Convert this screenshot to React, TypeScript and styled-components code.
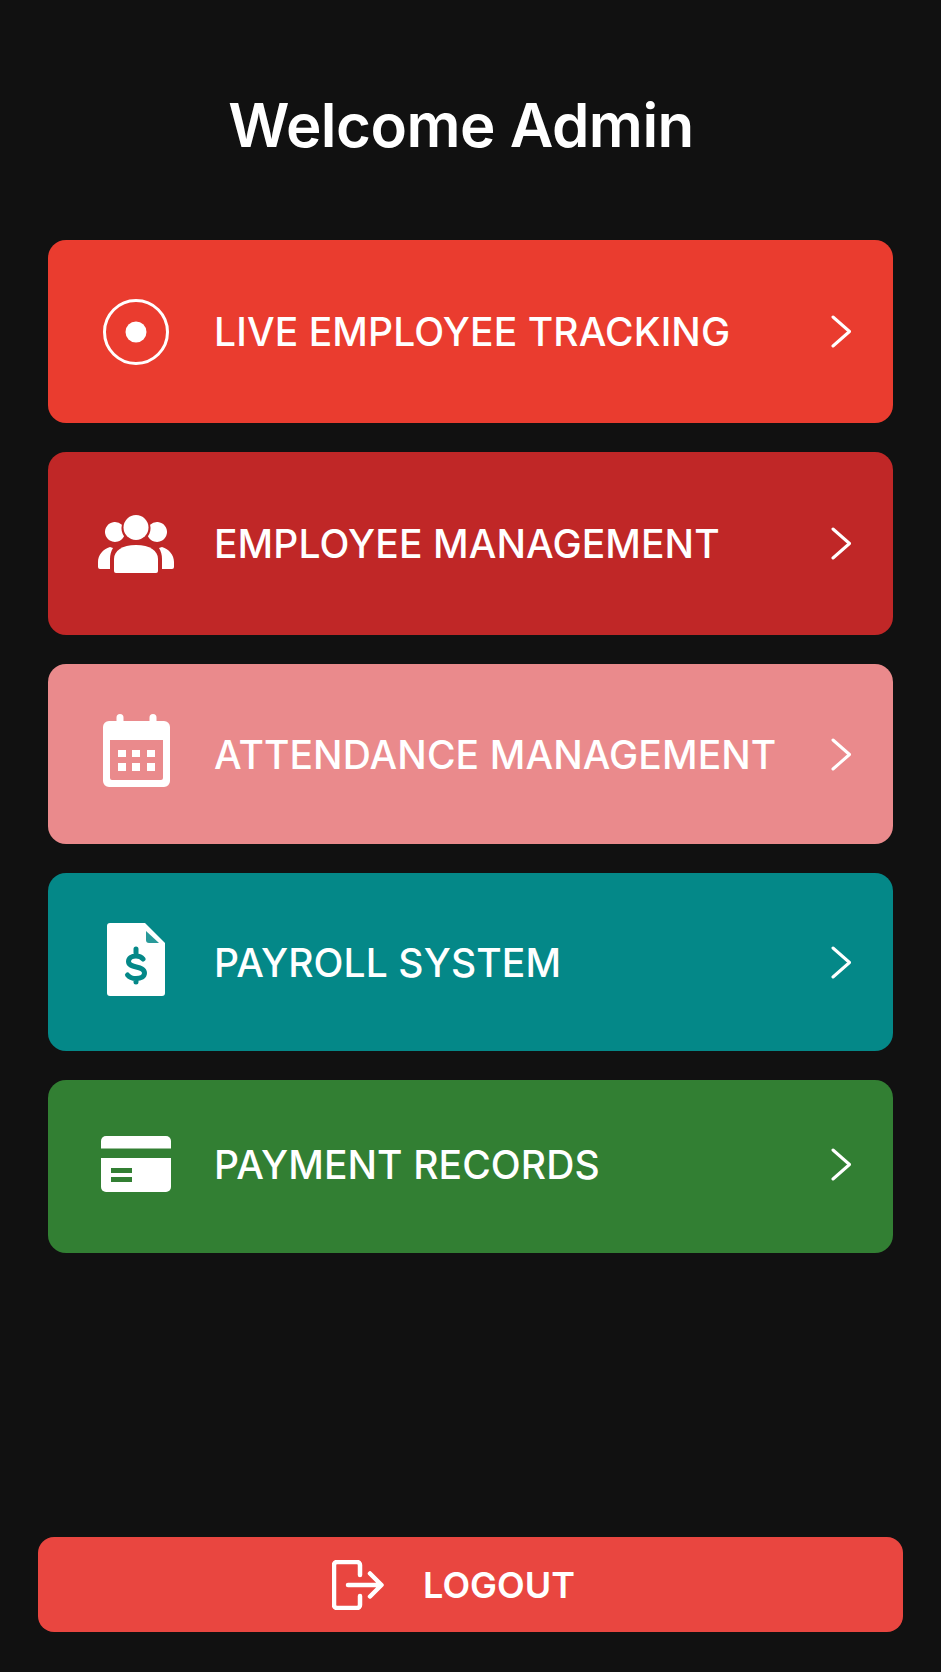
import React from "react";
import styled, { createGlobalStyle } from "styled-components";

const GlobalStyle = createGlobalStyle`
  html, body {
    margin: 0;
    padding: 0;
    background: #111111;
  }
  * {
    box-sizing: border-box;
  }
`;

const Screen = styled.main`
  width: 941px;
  height: 1672px;
  padding: 0 38px;
  display: flex;
  flex-direction: column;
  font-family: "Inter", "Liberation Sans", sans-serif;
  color: #ffffff;
  background: #111111;
`;

const Title = styled.h1`
  margin: 92px 0 0;
  padding-right: 19px;
  height: 66px;
  line-height: 66px;
  text-align: center;
  font-size: 60px;
  font-weight: 600;
  letter-spacing: -0.5px;
`;

const Menu = styled.nav`
  margin: 82px 10px 0;
  display: flex;
  flex-direction: column;
  gap: 29px;
`;

const Card = styled.a<{ $bg: string; $height: number; $shift: number }>`
  height: ${({ $height }) => $height}px;
  display: flex;
  align-items: center;
  padding: 0 42px ${({ $shift }) => $shift}px 50px;
  border-radius: 18px;
  background: ${({ $bg }) => $bg};
  color: #ffffff;
`;

const IconSlot = styled.span<{ $lift: number }>`
  width: 76px;
  height: 80px;
  margin-right: 40px;
  margin-bottom: ${({ $lift }) => $lift}px;
  display: flex;
  align-items: center;
  justify-content: center;
  flex-shrink: 0;
`;

const Label = styled.span`
  flex: 1;
  font-size: 39px;
  font-weight: 500;
  letter-spacing: 0.1px;
  white-space: nowrap;
`;

const Logout = styled.button`
  margin-top: auto;
  margin-bottom: 40px;
  height: 95px;
  display: flex;
  align-items: center;
  justify-content: center;
  gap: 39px;
  padding: 0 34px 0 0;
  border: none;
  border-radius: 16px;
  background: #e94640;
  color: #ffffff;
  font-family: inherit;
  font-size: 36px;
  font-weight: 600;
`;

const Chevron = () => (
  <svg width="20" height="33" viewBox="0 0 20 33" fill="none" stroke="#fff" strokeWidth="3" strokeLinecap="round" strokeLinejoin="round">
    <path d="M2 2l16.500 14.500L2 31" />
  </svg>
);

const TargetIcon = () => (
  <svg width="66" height="66" viewBox="0 0 66 66">
    <circle cx="33" cy="33" r="31.500" fill="none" stroke="#fff" strokeWidth="3" />
    <circle cx="33" cy="33" r="10.500" fill="#fff" />
  </svg>
);

const PeopleIcon = () => (
  <svg width="76" height="58" viewBox="0 0 76 58" fill="#fff">
    <circle cx="38" cy="12.500" r="12.500" />
    <path d="M16 56V44c0-8 8-14 22-14s22 6 22 14v12a2 2 0 0 1-2 2H18a2 2 0 0 1-2-2z" />
    <path d="M23.880 9.740A10 10 0 1 0 26.060 21.220 14.500 14.500 0 0 1 23.880 9.740z" />
    <path d="M52.120 9.740A10 10 0 1 1 49.940 21.220 14.500 14.500 0 0 0 52.120 9.740z" />
    <path d="M12 32C5 34 0 40 0 47v5a2 2 0 0 0 2 2h10V44c0-4 1-8 3-11z" />
    <path d="M64 32c7 2 12 8 12 15v5a2 2 0 0 1-2 2H64V44c0-4-1-8-3-11z" />
  </svg>
);

const CalendarIcon = () => (
  <svg width="67" height="73" viewBox="0 0 67 73" fill="#fff">
    <path
      fillRule="evenodd"
      d="M17 0a3.500 3.500 0 0 1 3.500 3.500V7h26V3.500a3.500 3.500 0 0 1 7 0V7H61a6 6 0 0 1 6 6v54a6 6 0 0 1-6 6H6a6 6 0 0 1-6-6V13a6 6 0 0 1 6-6h7.500V3.500A3.500 3.500 0 0 1 17 0zM7 26v38a2 2 0 0 0 2 2h49a2 2 0 0 0 2-2V26z"
    />
    <rect x="15" y="36" width="8" height="7" />
    <rect x="29" y="36" width="8" height="7" />
    <rect x="44" y="36" width="8" height="7" />
    <rect x="15" y="49" width="8" height="8" />
    <rect x="29" y="49" width="8" height="8" />
    <rect x="44" y="49" width="8" height="8" />
  </svg>
);

const InvoiceIcon = ({ ink }: { ink: string }) => (
  <svg width="58" height="73" viewBox="0 0 58 73">
    <path
      fill="#fff"
      d="M3 0h35l20 20v50a3 3 0 0 1-3 3H3a3 3 0 0 1-3-3V3a3 3 0 0 1 3-3z"
    />
    <path fill={ink} opacity="0.85" d="M39 8l13 12H42a3 3 0 0 1-3-3z" />
    <path
      fill="none"
      stroke={ink}
      strokeWidth="5"
      strokeLinecap="round"
      d="M36 36c-1.500-2-4-3-7-3-4.500 0-7.500 2-7.500 5.500 0 7.500 16 3.500 16 11.500 0 3.500-3.500 5.500-8.500 5.500-3.500 0-6.500-1-8.500-3.500M29 26v4M29 56v3"
    />
  </svg>
);

const CardIcon = ({ ink }: { ink: string }) => (
  <svg width="70" height="56" viewBox="0 0 70 56">
    <path fill="#fff" d="M5 0h60a5 5 0 0 1 5 5v7.500H0V5a5 5 0 0 1 5-5z" />
    <path fill="#fff" d="M0 22h70v29a5 5 0 0 1-5 5H5a5 5 0 0 1-5-5z" />
    <rect x="10" y="32" width="21" height="5" fill={ink} />
    <rect x="10" y="41" width="21" height="5" fill={ink} />
  </svg>
);

const LogoutIcon = () => (
  <svg width="52" height="50" viewBox="0 0 52 50" fill="none" stroke="#fff" strokeLinecap="round" strokeLinejoin="round">
    <path strokeWidth="4.500" d="M28 15V5a3 3 0 0 0-3-3H5a3 3 0 0 0-3 3v40a3 3 0 0 0 3 3h20a3 3 0 0 0 3-3V36" />
    <path strokeWidth="4.500" d="M16 25h33M38 13.500L49.500 25 38 36.500" />
  </svg>
);

const items = [
  { label: "LIVE EMPLOYEE TRACKING", bg: "#ea3c2f", height: 183, shift: 0, lift: 0, icon: <TargetIcon /> },
  { label: "EMPLOYEE MANAGEMENT", bg: "#c02727", height: 183, shift: 0, lift: 0, icon: <PeopleIcon /> },
  { label: "ATTENDANCE MANAGEMENT", bg: "#ea8a8c", height: 180, shift: 0, lift: 8, icon: <CalendarIcon /> },
  { label: "PAYROLL SYSTEM", bg: "#048888", height: 178, shift: 0, lift: 5, icon: <InvoiceIcon ink="#048888" /> },
  { label: "PAYMENT RECORDS", bg: "#327f33", height: 173, shift: 4, lift: 2, icon: <CardIcon ink="#327f33" /> },
];

export default function App() {
  return (
    <>
      <GlobalStyle />
      <Screen>
        <Title>Welcome Admin</Title>
        <Menu>
          {items.map((item) => (
            <Card key={item.label} $bg={item.bg} $height={item.height} $shift={item.shift}>
              <IconSlot $lift={item.lift}>{item.icon}</IconSlot>
              <Label>{item.label}</Label>
              <Chevron />
            </Card>
          ))}
        </Menu>
        <Logout>
          <LogoutIcon />
          <span>LOGOUT</span>
        </Logout>
      </Screen>
    </>
  );
}
